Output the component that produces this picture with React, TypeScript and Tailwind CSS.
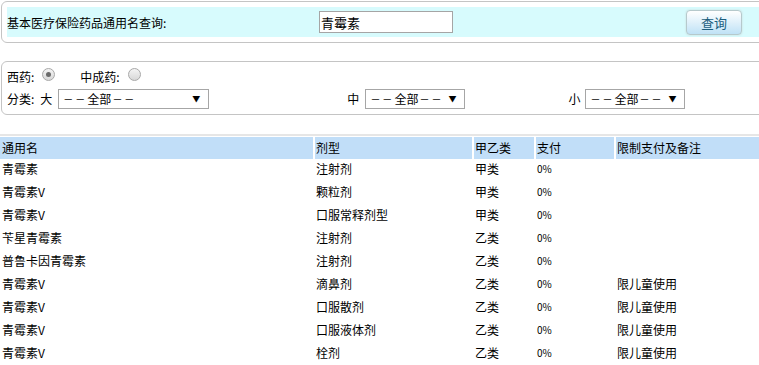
import React from "react";

const rows = [
  ["青霉素", "注射剂", "甲类", "0%", ""],
  ["青霉素V", "颗粒剂", "甲类", "0%", ""],
  ["青霉素V", "口服常释剂型", "甲类", "0%", ""],
  ["苄星青霉素", "注射剂", "乙类", "0%", ""],
  ["普鲁卡因青霉素", "注射剂", "乙类", "0%", ""],
  ["青霉素V", "滴鼻剂", "乙类", "0%", "限儿童使用"],
  ["青霉素V", "口服散剂", "乙类", "0%", "限儿童使用"],
  ["青霉素V", "口服液体剂", "乙类", "0%", "限儿童使用"],
  ["青霉素V", "栓剂", "乙类", "0%", "限儿童使用"],
];

function Radio({ checked }: { checked: boolean }) {
  return (
    <span className="mb-[6px] flex h-[13px] w-[13px] items-center justify-center rounded-full border border-[#a8a8a8] bg-gradient-to-b from-[#f4f4f4] to-[#d8d8d8]">
      {checked && <span className="h-[5px] w-[5px] rounded-full bg-[#6a6a6a]" />}
    </span>
  );
}

function Select({ w }: { w: string }) {
  return (
    <div className={`flex h-[20px] items-center justify-between whitespace-nowrap border border-[#a6a6a6] bg-white pl-[4px] pr-[8px] ${w}`}>
      <span className="flex items-center whitespace-nowrap">
        <span className="text-[10px] tracking-[2px]">－－</span>
        <span>全部</span>
        <span className="ml-[1px] text-[10px] tracking-[2px]">－－</span>
      </span>
      <span className="text-[8px]">▼</span>
    </div>
  );
}

export default function App() {
  return (
    <div
      className="w-[759px] h-[365px] overflow-hidden bg-white text-[12px] leading-none text-black"
      style={{ fontFamily: '"Noto Sans CJK SC", "Liberation Sans", sans-serif' }}
    >
      {/* Panel 1 */}
      <div className="ml-[1px] mt-[1px] h-[42px] w-[800px] rounded-l-[6px] border border-[#c4c4c4] pl-[5px] pt-[5px]">
        <div className="flex h-[30px] items-center bg-[#d7fbfd]">
          <span className="w-[312px] pt-[1px]">基本医疗保险药品通用名查询:</span>
          <div className="flex h-[22px] w-[134px] items-center border border-[#a5a5a5] bg-white pl-[1px] text-[13px]">
            青霉素
          </div>
          <button className="ml-[233px] flex h-[25px] w-[56px] items-center justify-center rounded-[4px] border border-[#b6c9cc] bg-gradient-to-b from-white to-[#bfe2f6] text-[13px] text-[#1b5d7d] shadow-[0_0_2px_#c8d4d4]">
            查询
          </button>
        </div>
      </div>

      {/* Panel 2 */}
      <div className="ml-[1px] mt-[18px] w-[800px] rounded-l-[6px] border border-[#c4c4c4] pl-[5px] pt-[7px] pb-[5px]">
        <div className="flex h-[16px] items-center">
          <span>西药:</span>
          <span className="ml-[8px]">
            <Radio checked />
          </span>
          <span className="ml-[25px]">中成药:</span>
          <span className="ml-[8px]">
            <Radio checked={false} />
          </span>
        </div>
        <div className="mt-[4px] flex h-[20px] items-center">
          <span>分类:</span>
          <span className="ml-[6px]">大</span>
          <span className="ml-[6px]">
            <Select w="w-[151px]" />
          </span>
          <span className="ml-[138px]">中</span>
          <span className="ml-[6px]">
            <Select w="w-[100px]" />
          </span>
          <span className="ml-[103px]">小</span>
          <span className="ml-[5px]">
            <Select w="w-[100px]" />
          </span>
        </div>
      </div>

      {/* Table */}
      <div className="mt-[19px] border-t-2 border-[#e6e6e6] pt-[1px]">
        <div className="grid h-[22px] grid-cols-[313px_157px_60px_78px_1fr] gap-x-[2px]">
          <div className="flex items-center bg-[#c1def8] pb-[1px] pl-[2px]">通用名</div>
          <div className="flex items-center bg-[#c1def8] pb-[1px] pl-[1px]">剂型</div>
          <div className="flex items-center bg-[#c1def8] pb-[1px] pl-[1px]">甲乙类</div>
          <div className="flex items-center bg-[#c1def8] pb-[1px] pl-[1px]">支付</div>
          <div className="flex items-center bg-[#c1def8] pb-[1px] pl-[1px]">限制支付及备注</div>
        </div>
        {rows.map((r, i) => (
          <div key={i} className="grid h-[23px] grid-cols-[313px_157px_60px_78px_1fr] gap-x-[2px]">
            <div className="flex items-center pb-[3px] pl-[2px]">{r[0]}</div>
            <div className="flex items-center pb-[3px] pl-[1px]">{r[1]}</div>
            <div className="flex items-center pb-[3px] pl-[1px]">{r[2]}</div>
            <div className="flex items-center pb-[3px] pl-[1px] text-[10px]">{r[3]}</div>
            <div className="flex items-center pb-[3px] pl-[1px]">{r[4]}</div>
          </div>
        ))}
      </div>
    </div>
  );
}
